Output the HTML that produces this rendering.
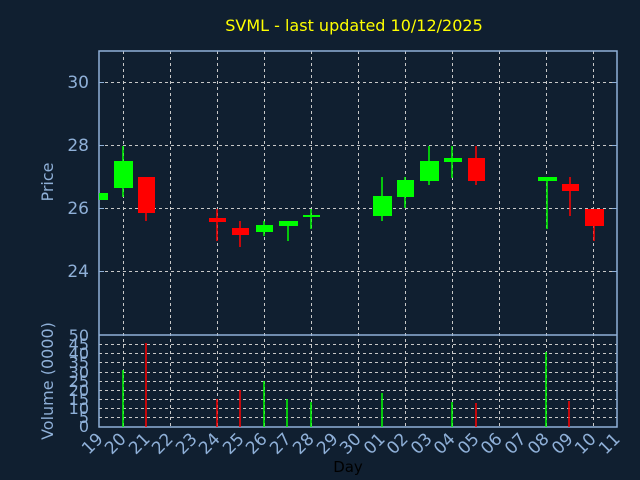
<html><head><style>body{margin:0;background:#101f30;}svg{display:block}text{font-family:"DejaVu Sans","Liberation Sans",sans-serif;}</style></head><body>
<svg width="640" height="480" viewBox="0 0 640 480">
<rect width="640" height="480" fill="#101f30"/>
<text x="354" y="31" fill="#ffff00" font-size="16" text-anchor="middle">SVML - last updated 10/12/2025</text>
<g stroke="#c8c8c8" stroke-dasharray="3,3" stroke-width="1">
<path d="M99 82.5H617M99 145.5H617M99 208.5H617M99 271.5H617"/>
<path d="M123.5 51V427M170.5 51V427M217.5 51V427M264.5 51V427M311.5 51V427M358.5 51V427M405.5 51V427M452.5 51V427M499.5 51V427M546.5 51V427M593.5 51V427"/>
<path d="M99 344.5H617M99 353.5H617M99 362.5H617M99 372.5H617M99 381.5H617M99 390.5H617M99 399.5H617M99 408.5H617M99 417.5H617"/>
</g>
<g fill="none" stroke="#8fb0d8" stroke-width="1.5">
<rect x="99" y="51" width="518" height="376"/>
<path d="M99 335H617"/>
</g>
<g stroke="#8fb0d8" stroke-width="1">
<path d="M99 82.5h5M99 145.5h5M99 208.5h5M99 271.5h5M612 82.5h5M612 145.5h5M612 208.5h5M612 271.5h5"/>
</g>
<g fill="#8fb0d8" font-size="17" text-anchor="end">
<text x="89" y="88">30</text><text x="89" y="151">28</text><text x="89" y="214">26</text><text x="89" y="277">24</text>
</g>
<text transform="translate(53,182) rotate(-90)" fill="#8fb0d8" font-size="16" text-anchor="middle">Price</text>
<text transform="translate(53,381) rotate(-90)" fill="#8fb0d8" font-size="16" text-anchor="middle">Volume (0000)</text>
<g fill="#8fb0d8" font-size="16" text-anchor="end">
<text x="89" y="341">50</text><text x="89" y="350">45</text><text x="89" y="359">40</text><text x="89" y="368">35</text><text x="89" y="378">30</text><text x="89" y="387">25</text><text x="89" y="396">20</text><text x="89" y="405">15</text><text x="89" y="414">10</text><text x="89" y="423">5</text><text x="89" y="432">0</text>
</g>
<g fill="#8fb0d8" font-size="17" text-anchor="end">
<text transform="translate(104,440) rotate(-45)">19</text>
<text transform="translate(127,440) rotate(-45)">20</text>
<text transform="translate(151,440) rotate(-45)">21</text>
<text transform="translate(174,440) rotate(-45)">22</text>
<text transform="translate(198,440) rotate(-45)">23</text>
<text transform="translate(221,440) rotate(-45)">24</text>
<text transform="translate(245,440) rotate(-45)">25</text>
<text transform="translate(268,440) rotate(-45)">26</text>
<text transform="translate(292,440) rotate(-45)">27</text>
<text transform="translate(315,440) rotate(-45)">28</text>
<text transform="translate(339,440) rotate(-45)">29</text>
<text transform="translate(362,440) rotate(-45)">30</text>
<text transform="translate(386,440) rotate(-45)">01</text>
<text transform="translate(409,440) rotate(-45)">02</text>
<text transform="translate(433,440) rotate(-45)">03</text>
<text transform="translate(456,440) rotate(-45)">04</text>
<text transform="translate(480,440) rotate(-45)">05</text>
<text transform="translate(503,440) rotate(-45)">06</text>
<text transform="translate(527,440) rotate(-45)">07</text>
<text transform="translate(550,440) rotate(-45)">08</text>
<text transform="translate(574,440) rotate(-45)">09</text>
<text transform="translate(597,440) rotate(-45)">10</text>
<text transform="translate(621,440) rotate(-45)">11</text>
</g>
<text x="348" y="472" fill="#000" font-size="15" text-anchor="middle">Day</text>
<g stroke="#00ff00" stroke-width="1.5">
<path d="M123 146V197M264 221V236M288 221V241M311 209V229M382 177V221M405 177V208M429 146V185M452 146V178M547 177V229"/>
<path d="M123 370V427M264 381V427M287 399V427M311 402V427M382 393V427M452 402V427M546 352V427"/>
</g>
<g stroke="#ff0000" stroke-width="1.5">
<path d="M146 177V221M217 209V241M240 221V247M476 146V185M570 177V216M594 209V241"/>
<path d="M146 343V427M217 399V427M240 390V427M476 403V427M569 401V427"/>
</g>
<g fill="#00ff00">
<rect x="99" y="193" width="9" height="7"/>
<rect x="114" y="161" width="19" height="27"/>
<rect x="256" y="225" width="17" height="7"/>
<rect x="279" y="221" width="19" height="5"/>
<rect x="303" y="215" width="17" height="2"/>
<rect x="373" y="196" width="19" height="20"/>
<rect x="397" y="180" width="17" height="17"/>
<rect x="420" y="161" width="19" height="20"/>
<rect x="444" y="158" width="18" height="4"/>
<rect x="538" y="177" width="19" height="4"/>
</g>
<g fill="#ff0000">
<rect x="138" y="177" width="17" height="36"/>
<rect x="209" y="218" width="17" height="4"/>
<rect x="232" y="228" width="17" height="7"/>
<rect x="468" y="158" width="17" height="23"/>
<rect x="562" y="184" width="17" height="7"/>
<rect x="585" y="209" width="19" height="17"/>
</g>
</svg>
</body></html>
